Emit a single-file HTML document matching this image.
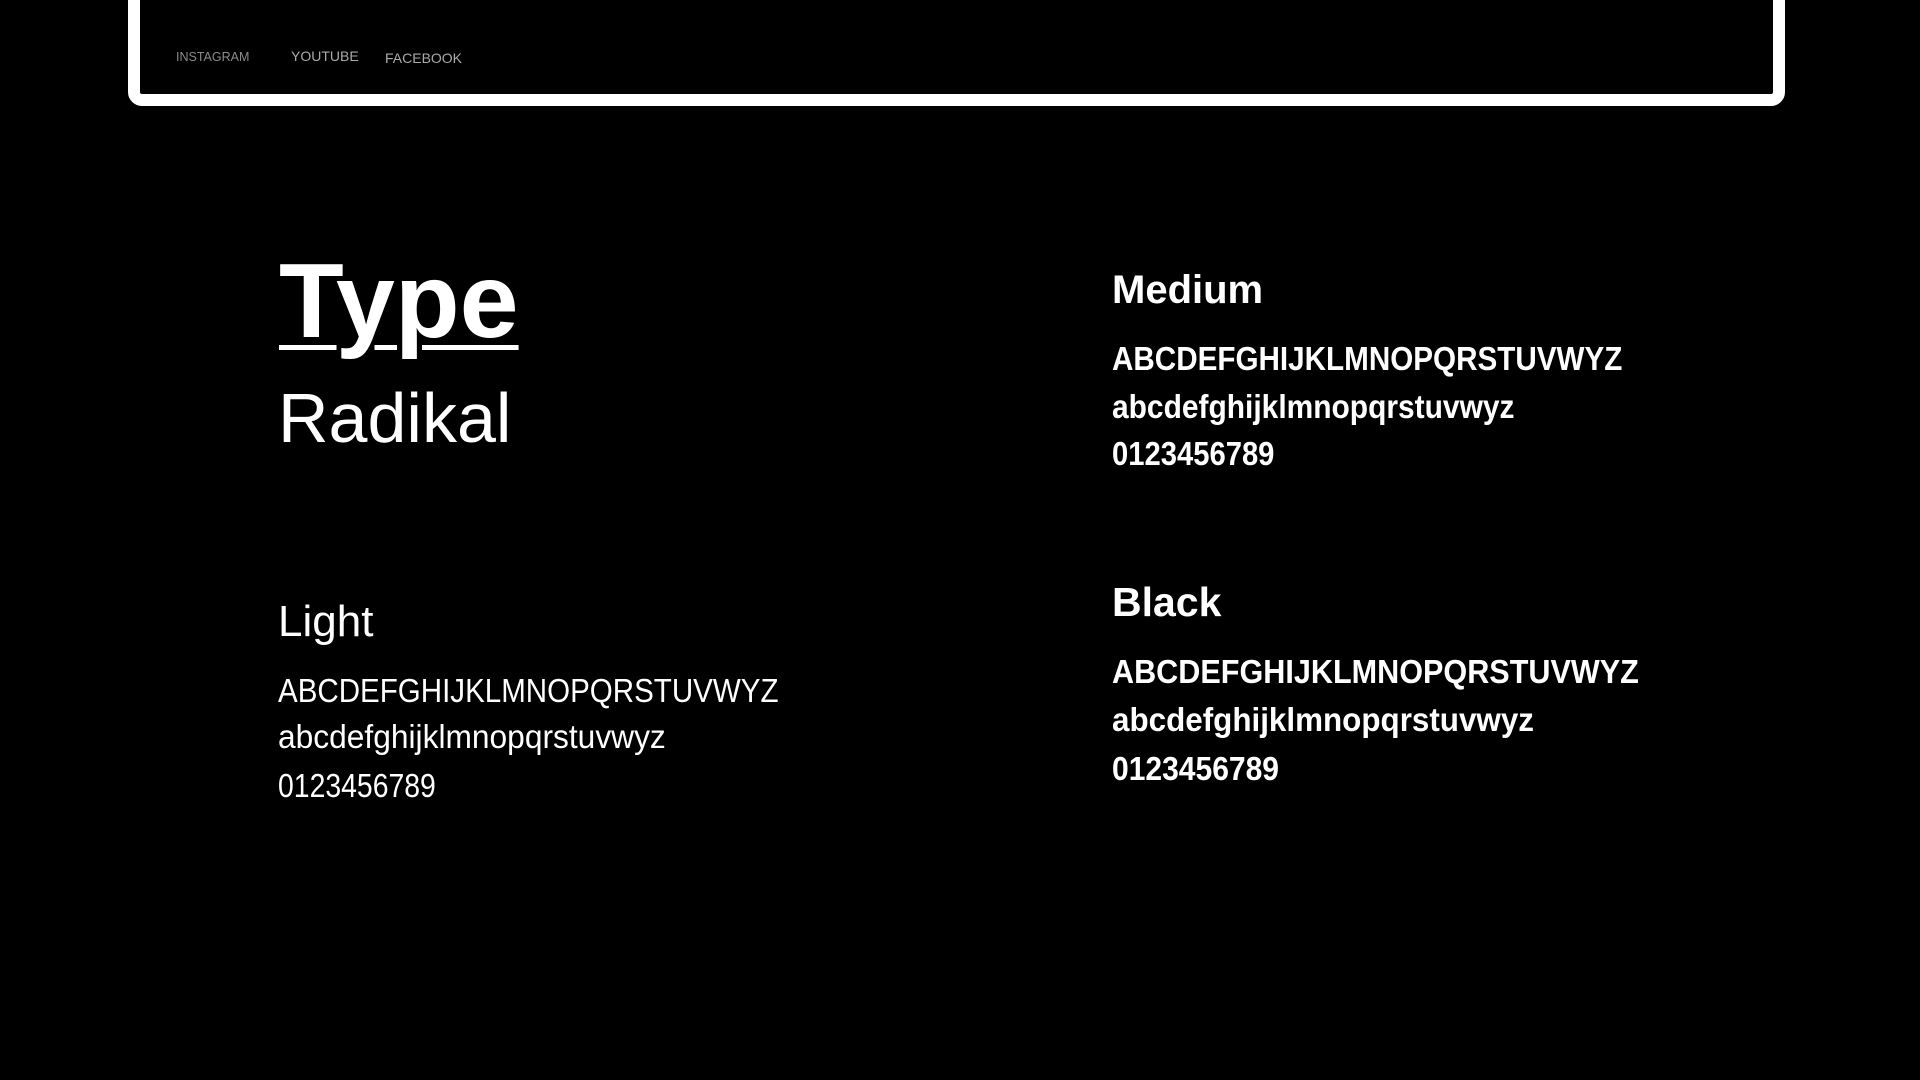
<!DOCTYPE html>
<html><head><meta charset="utf-8"><style>
html,body{margin:0;padding:0;background:#000;width:1920px;height:1080px;overflow:hidden}
body{position:relative;font-family:"Liberation Sans",sans-serif;color:#fff}
.frame{position:absolute;left:128px;top:-40px;width:1633px;height:122px;border:12px solid #fff;border-radius:14px}
.t{position:absolute;line-height:1;white-space:nowrap;transform-origin:0 0}
.nav{position:absolute;font-size:13px;color:#9a9a9a;line-height:1}
</style></head><body>
<div class="frame"></div>
<div class="nav" style="left:176px;top:51px;font-size:12.5px;color:#8a8a8a">INSTAGRAM</div>
<div class="nav" style="left:291px;top:49px;font-size:14px;color:#aaa">YOUTUBE</div>
<div class="nav" style="left:385px;top:51px;font-size:14px;color:#aaa">FACEBOOK</div>

<div class="t" style="left:279px;top:248px;font-size:106px;font-weight:bold;text-decoration:underline;text-decoration-thickness:5px;text-underline-offset:8px">Type</div>
<div class="t" style="left:278px;top:383px;font-size:70px">Radikal</div>

<div class="t" style="left:278px;top:600px;font-size:44px">Light</div>
<div class="t" style="left:278px;top:674px;font-size:33px;transform:scaleX(.895)">ABCDEFGHIJKLMNOPQRSTUVWYZ</div>
<div class="t" style="left:278px;top:720px;font-size:33px;transform:scaleX(.961)">abcdefghijklmnopqrstuvwyz</div>
<div class="t" style="left:278px;top:769px;font-size:33px;transform:scaleX(.86)">0123456789</div>

<div class="t" style="left:1112px;top:270px;font-size:40px;font-weight:bold">Medium</div>
<div class="t" style="left:1112px;top:342px;font-size:33px;font-weight:bold;transform:scaleX(.898)">ABCDEFGHIJKLMNOPQRSTUVWYZ</div>
<div class="t" style="left:1112px;top:390px;font-size:33px;font-weight:bold;transform:scaleX(.907)">abcdefghijklmnopqrstuvwyz</div>
<div class="t" style="left:1112px;top:437px;font-size:33px;font-weight:bold;transform:scaleX(.885)">0123456789</div>

<div class="t" style="left:1112px;top:582px;font-size:41px;font-weight:bold">Black</div>
<div class="t" style="left:1112px;top:655px;font-size:33px;font-weight:bold;transform:scaleX(.927)">ABCDEFGHIJKLMNOPQRSTUVWYZ</div>
<div class="t" style="left:1112px;top:703px;font-size:33px;font-weight:bold;transform:scaleX(.951)">abcdefghijklmnopqrstuvwyz</div>
<div class="t" style="left:1112px;top:752px;font-size:33px;font-weight:bold;transform:scaleX(.91)">0123456789</div>
</body></html>
